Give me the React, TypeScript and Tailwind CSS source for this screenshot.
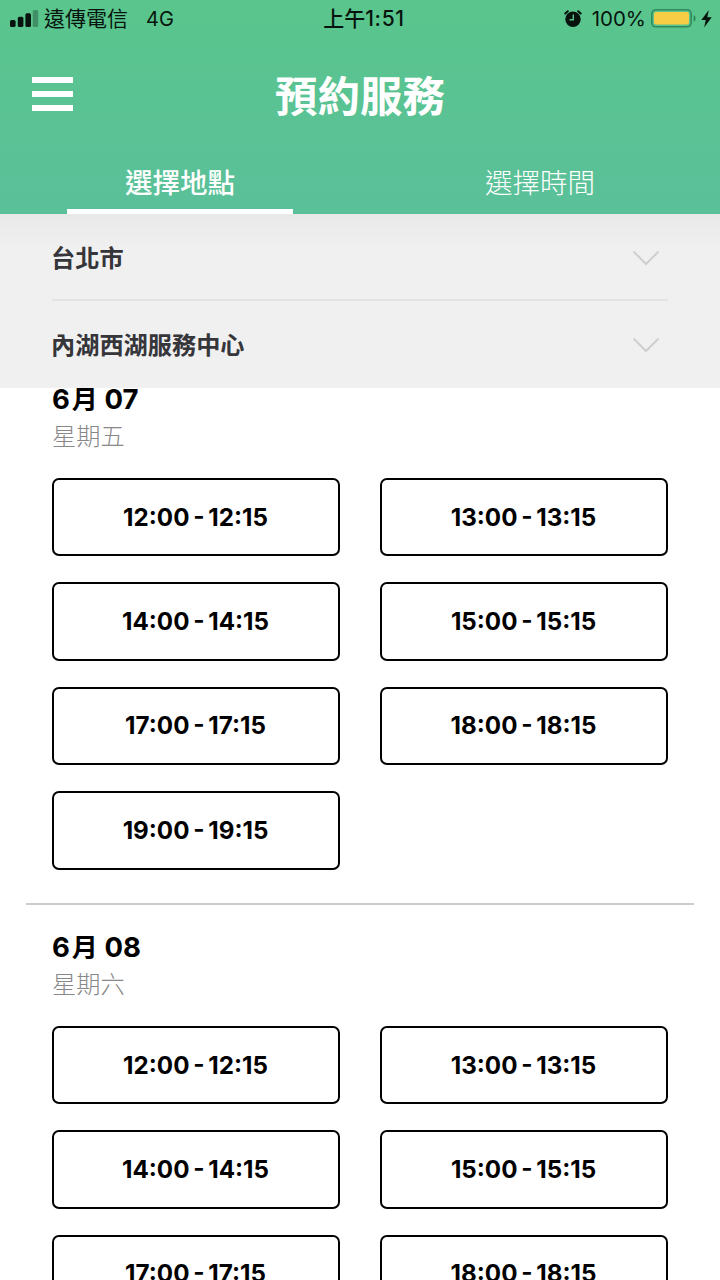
import { clsx } from "clsx";

type Day = {
  month: number;
  day: string;
  weekday: string;
  slots: string[];
};

const SLOTS = [
  "12:00 - 12:15",
  "13:00 - 13:15",
  "14:00 - 14:15",
  "15:00 - 15:15",
  "17:00 - 17:15",
  "18:00 - 18:15",
  "19:00 - 19:15",
];

const days: Day[] = [
  { month: 6, day: "07", weekday: "星期五", slots: SLOTS },
  { month: 6, day: "08", weekday: "星期六", slots: SLOTS },
];

function StatusBar() {
  return (
    <div className="grid h-9 grid-cols-3 items-center pl-[10px] pr-[8px] text-[20px] leading-9 text-[#06140d]">
      <div className="flex items-center">
        <svg className="mr-[5px] h-[18px] w-[29px] shrink-0" viewBox="0 0 29 18" fill="currentColor">
          <rect x="0" y="10" width="5.6" height="7" rx="1.6" />
          <rect x="7.8" y="6.8" width="5.6" height="10.2" rx="1.6" />
          <rect x="15.4" y="3.2" width="5.6" height="13.8" rx="1.6" />
          <rect x="22.8" y="0" width="5.4" height="17" rx="1.6" opacity="0.3" />
        </svg>
        <span className="whitespace-nowrap text-[21px]">遠傳電信</span>
        <span className="ml-[18px] pt-px">4G</span>
      </div>
      <div className="flex items-center justify-center pl-[6px] font-medium">
        <span className="text-[21px]">上午</span>
        <span className="text-[21px] tracking-[0.7px]">1:51</span>
      </div>
      <div className="flex items-center justify-end">
        <svg className="mr-[10px] h-[18px] w-[18px]" viewBox="0 0 18 18">
          <circle cx="9" cy="9.2" r="7.7" fill="currentColor" />
          <path d="M1.3 3.6 3.8 1.3M16.7 3.6l-2.5-2.3" stroke="currentColor" strokeWidth="2" strokeLinecap="round" />
          <path d="M9.3 4.6v5.2H5.6" stroke="#5bc48e" strokeWidth="1.4" fill="none" />
        </svg>
        <span className="pt-px text-[20.5px]">100%</span>
        <svg className="ml-[5px] h-5 w-[45px]" viewBox="0 0 45 20">
          <rect x="0" y="0" width="41" height="18.6" rx="5" fill="#2f8a5c" />
          <rect x="1.6" y="1.6" width="37.8" height="15.4" rx="3.6" fill="#5bc48e" />
          <rect x="3" y="3" width="35" height="12.6" rx="2.4" fill="#f7cd46" />
          <path d="M42.6 6.2c1.6.6 2 1.8 2 3.2s-.4 2.6-2 3.2z" fill="#2f8a5c" />
        </svg>
        <svg className="ml-[5px] h-[18px] w-[11px]" viewBox="0 0 11 18" fill="currentColor">
          <path d="M7.8 0 .3 10h4.4L3.2 17.5 10.7 7.2H6.3z" />
        </svg>
      </div>
    </div>
  );
}

function Tab({ label, active = false }: { label: string; active?: boolean }) {
  return (
    <button
      className={clsx(
        "flex h-full w-[226px] items-center justify-center border-b-[5px] pt-[7px] text-[27.5px] text-white",
        active ? "border-white font-medium" : "border-transparent font-light",
      )}
    >
      {label}
    </button>
  );
}

function Filter({ label }: { label: string }) {
  return (
    <button className="flex h-[86px] w-full items-center justify-between pr-2 text-[24.2px] font-bold text-[#35353a]">
      <span className="-ml-px pt-[5px]">{label}</span>
      <svg className="mt-px h-4 w-7" viewBox="0 0 28 16" fill="none" stroke="#cfcfcf" strokeWidth="2">
        <path d="M1.5 1.5 14 14 26.5 1.5" />
      </svg>
    </button>
  );
}

function DaySection({ day }: { day: Day }) {
  return (
    <section className="mx-[26px] h-[548px] border-t-2 border-[#cccccc] px-[26px] pt-[25px]">
      <h2 className="h-[34px] text-[27.5px] font-bold leading-[34px] text-black">
        {day.month}
        <span className="ml-[2px] text-[26px]">月</span> {day.day}
      </h2>
      <p className="mt-[3px] text-[24.2px] font-light leading-9 text-[#888888]">{day.weekday}</p>
      <div className="mt-[23px] grid grid-cols-2 gap-x-10 gap-y-[26px]">
        {day.slots.map((slot) => (
          <button
            key={slot}
            className="flex h-[78.4px] items-center justify-center rounded-[7px] border-2 border-black pr-px pt-px text-[24.2px] font-bold text-black [word-spacing:-2px]"
          >
            {slot}
          </button>
        ))}
      </div>
    </section>
  );
}

export default function App() {
  return (
    <div className="flex h-[1280px] w-[720px] flex-col overflow-hidden bg-white font-['Inter','Noto_Sans_CJK_TC',sans-serif]">
      <header className="flex h-[214px] shrink-0 flex-col bg-linear-to-b from-[#5ac58c] to-[#5ac09a]">
        <StatusBar />
        <div className="grid h-[116px] grid-cols-[1fr_auto_1fr] items-center px-8">
          <button className="flex w-[41px] flex-col gap-2">
            <span className="h-[6px] bg-white" />
            <span className="h-[6px] bg-white" />
            <span className="h-[6px] bg-white" />
          </button>
          <h1 className="pt-[6px] text-[42.5px] font-bold leading-none text-white">預約服務</h1>
        </div>
        <nav className="grid flex-1 grid-cols-2 justify-items-center">
          <Tab label="選擇地點" active />
          <Tab label="選擇時間" />
        </nav>
      </header>

      <div className="h-[174px] shrink-0 bg-[#f0f0f0] bg-linear-to-b from-[#e9e9e9] to-[#f0f0f0] to-20% px-[52px]">
        <div className="h-[87px] border-b-2 border-[#e3e3e3]">
          <Filter label="台北市" />
        </div>
        <Filter label="內湖西湖服務中心" />
      </div>

      {/* the list is scrolled, its first divider sits under the filters */}
      <main className="min-h-0 flex-1 overflow-hidden">
        <div className="-mt-[33px]">
          {days.map((day) => (
            <DaySection key={day.day} day={day} />
          ))}
        </div>
      </main>
    </div>
  );
}
